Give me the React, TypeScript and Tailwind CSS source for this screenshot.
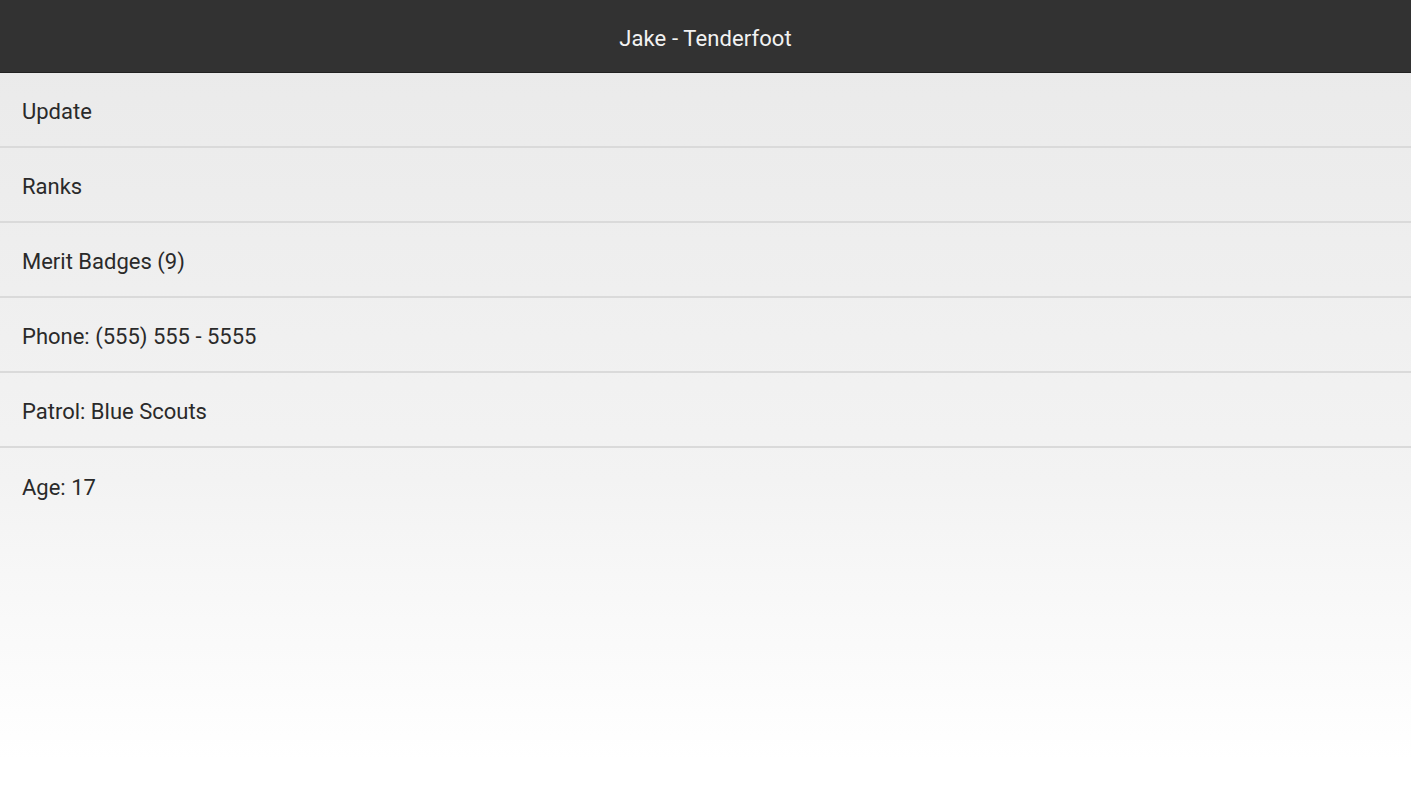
const items = [
  "Update",
  "Ranks",
  "Merit Badges (9)",
  "Phone: (555) 555 - 5555",
  "Patrol: Blue Scouts",
  "Age: 17",
];

export default function App() {
  return (
    <div
      className="h-[800px] w-full flex flex-col bg-gradient-to-b from-[#e9e9e9] via-[#f3f3f3] via-60% to-white to-95%"
      style={{ fontFamily: "Roboto, 'Noto Sans', sans-serif" }}
    >
      {/* Action bar */}
      <div className="h-[73px] flex-shrink-0 bg-[#323232] border-b border-[#222] flex items-center justify-center pt-[5px]">
        <h1 className="text-[22px] text-[#f2f2f2] tracking-[0.1px]">Jake - Tenderfoot</h1>
      </div>
      {/* List */}
      <ul className="flex flex-col">
        {items.map((label, i) => (
          <li
            key={label}
            className={
              i < items.length - 1
                ? "h-[75px] flex items-center px-[22px] pt-[4px] border-b-2 border-[#dadada]"
                : "h-[75px] flex items-center px-[22px] pt-[4px]"
            }
          >
            <span className="text-[22px] text-[#2a2a2a]">{label}</span>
          </li>
        ))}
      </ul>
    </div>
  );
}
